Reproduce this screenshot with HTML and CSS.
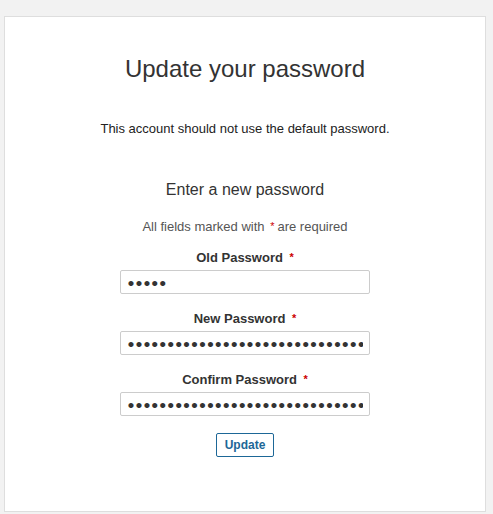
FILE: index.html
```html
<!DOCTYPE html>
<html>
<head>
<meta charset="utf-8">
<link rel="stylesheet" href="styles.css">
</head>
<body>
<div class="card">
  <h1 class="title">Update your password</h1>
  <p class="notice">This account should not use the default password.</p>
  <h2 class="subtitle">Enter a new password</h2>
  <p class="required-note">All fields marked with <span class="req">*</span>are required</p>
  <form class="form">
    <div class="field">
      <label class="label">Old Password <span class="req">*</span></label>
      <input class="input" type="password" value="abcde">
    </div>
    <div class="field">
      <label class="label">New Password <span class="req">*</span></label>
      <input class="input" type="password" value="abcdefghijabcdefghijabcdefghijabcdefghij">
    </div>
    <div class="field">
      <label class="label">Confirm Password <span class="req">*</span></label>
      <input class="input" type="password" value="abcdefghijabcdefghijabcdefghijabcdefghij">
    </div>
    <button class="btn" type="button">Update</button>
  </form>
</div>
</body>
</html>
```
FILE: styles.css
```css
html, body {
  margin: 0;
  padding: 0;
  background: #f2f2f2;
}
body {
  padding: 16px 7px 3px 4px;
  font-family: "Liberation Sans", Arial, sans-serif;
  color: #333;
}
.card {
  background: #fff;
  border: 1px solid #dedede;
  height: 494px;
  box-sizing: content-box;
  display: flex;
  flex-direction: column;
  align-items: center;
}
.title {
  margin: 38px 0 0;
  font-size: 24px;
  font-weight: normal;
  line-height: 28px;
  color: #333;
}
.notice {
  margin: 38px 0 0;
  font-size: 13px;
  line-height: 16px;
  color: #222;
}
.subtitle {
  margin: 43px 0 0;
  font-size: 16px;
  font-weight: normal;
  line-height: 20px;
  color: #333;
}
.required-note {
  margin: 18px 0 0;
  font-size: 13px;
  line-height: 16px;
  color: #555;
}
.required-note .req {
  margin: 0 3px 0 2px;
}
.req {
  color: #c00;
  font-size: 11px;
  vertical-align: 1px;
}
.form {
  margin-top: 14px;
  display: flex;
  flex-direction: column;
  align-items: center;
}
.field {
  display: flex;
  flex-direction: column;
  align-items: center;
  margin-bottom: 16px;
}
.label {
  font-size: 13px;
  font-weight: bold;
  line-height: 16px;
  color: #333;
  margin-bottom: 4px;
}
.label .req {
  margin-left: 3px;
}
.input {
  width: 250px;
  height: 24px;
  box-sizing: border-box;
  border: 1px solid #ccc;
  border-radius: 2px;
  padding: 0 6px;
  font-family: Lato, sans-serif;
  font-size: 13.7px;
  color: #333;
  background: #fff;
}
.btn {
  margin-top: 1px;
  width: 58px;
  height: 24px;
  box-sizing: border-box;
  background: #fff;
  border: 1px solid #1d6797;
  border-radius: 2px;
  color: #1d6797;
  font-family: "Liberation Sans", Arial, sans-serif;
  font-size: 12px;
  font-weight: bold;
  padding: 0;
}
```
